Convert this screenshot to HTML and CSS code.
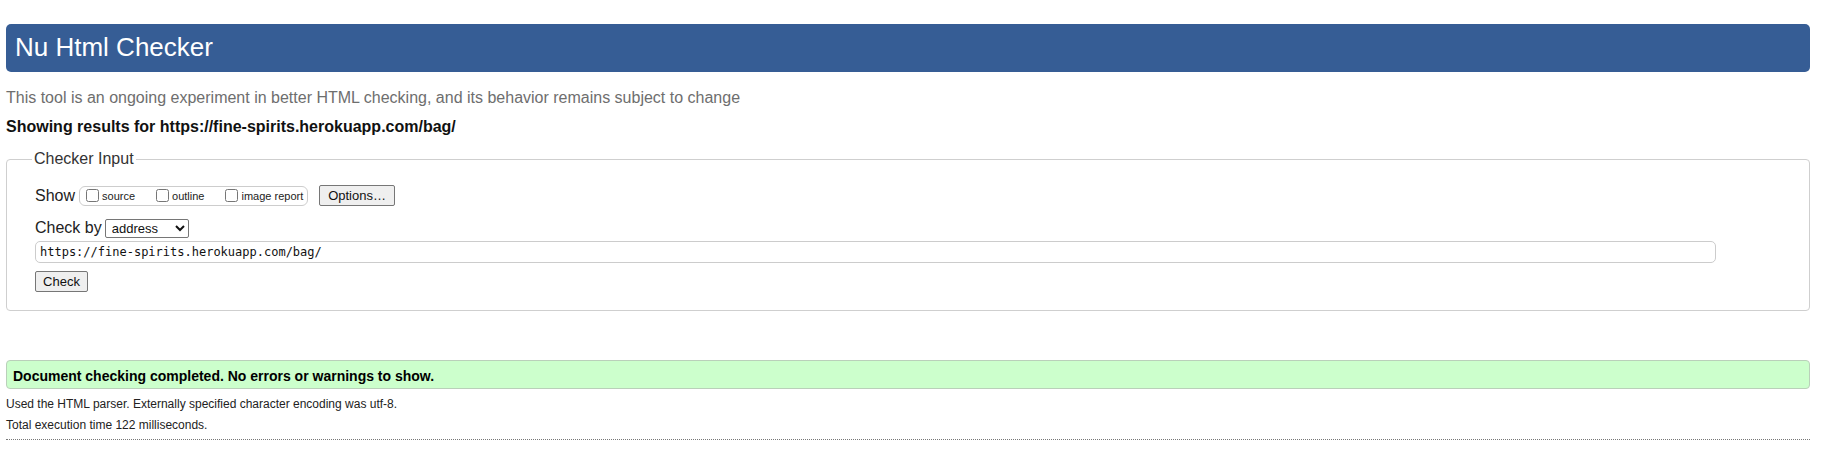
FILE: index.html
```html
<!DOCTYPE html>
<html>
<head>
<meta charset="utf-8">
<title>Nu Html Checker</title>
<link rel="stylesheet" href="styles.css">
</head>
<body>
<div class="page">
  <h1 class="title">Nu Html Checker</h1>
  <p class="intro">This tool is an ongoing experiment in better HTML checking, and its behavior remains subject to change</p>
  <p class="showing">Showing results for https://fine-spirits.herokuapp.com/bag/</p>
  <fieldset class="input-box">
    <legend class="legend">Checker Input</legend>
    <div class="row row-show">
      <span class="label">Show</span>
      <span class="checks">
        <label class="check"><input type="checkbox" class="cb"><span>source</span></label>
        <label class="check"><input type="checkbox" class="cb"><span>outline</span></label>
        <label class="check"><input type="checkbox" class="cb"><span>image report</span></label>
      </span>
      <button class="btn btn-options" type="button">Options…</button>
    </div>
    <div class="row row-by">
      <span class="label">Check by</span>
      <select class="sel"><option>address</option></select>
    </div>
    <div class="row row-url">
      <input class="url" type="text" value="https://fine-spirits.herokuapp.com/bag/">
    </div>
    <div class="row row-check">
      <button class="btn btn-check" type="button">Check</button>
    </div>
  </fieldset>
  <div class="success">Document checking completed. No errors or warnings to show.</div>
  <p class="details">Used the HTML parser. Externally specified character encoding was utf-8.</p>
  <p class="details details-2">Total execution time 122 milliseconds.</p>
  <hr class="rule">
</div>
</body>
</html>
```

FILE: styles.css
```css
html, body {
  margin: 0;
  padding: 0;
  background: #fff;
}
body {
  font-family: "Liberation Sans", Arial, sans-serif;
  color: #000;
}
.page {
  width: 1804px;
  margin-left: 6px;
  padding-top: 24px;
}
.title {
  margin: 0;
  height: 48px;
  box-sizing: border-box;
  background: #365d95;
  color: #fff;
  border-radius: 5px;
  font-size: 26px;
  font-weight: normal;
  line-height: 46px;
  padding-left: 9px;
}
.intro {
  margin: 17px 0 0 0;
  font-size: 16px;
  line-height: 18px;
  color: #6e6e6e;
}
.showing {
  margin: 11px 0 0 0;
  font-size: 16px;
  line-height: 18px;
  font-weight: bold;
  color: #111;
}
.input-box {
  margin: 14px 0 0 0;
  padding: 0 0 18px 28px;
  border: 1px solid #cfcfcf;
  border-radius: 4px;
}
.legend {
  font-size: 16px;
  line-height: 18px;
  color: #333;
  padding: 0 2px;
  margin-left: -3px;
}
.row {
  display: flex;
  align-items: center;
}
.label {
  font-size: 16px;
  line-height: 18px;
  color: #222;
}
.row-show {
  margin-top: 17px;
  height: 21px;
}
.checks {
  display: inline-flex;
  align-items: center;
  margin-left: 4px;
  height: 20px;
  width: 229px;
  box-sizing: border-box;
  border: 1px solid #cdcdcd;
  border-radius: 6px;
  padding-left: 6px;
}
.check {
  display: inline-flex;
  align-items: center;
  font-size: 11px;
  color: #222;
  margin-right: 21px;
}
.check:last-child {
  margin-right: 0;
}
.cb {
  width: 13px;
  height: 13px;
  margin: 0 3px 0 0;
}
.btn {
  font-family: "Liberation Sans", Arial, sans-serif;
  background: #efefef;
  border: 1px solid #767676;
  border-radius: 2px;
  color: #111;
  padding: 0;
  font-size: 13px;
}
.btn-options {
  margin-left: 11px;
  width: 76px;
  height: 21px;
}
.row-by {
  margin-top: 12px;
  height: 20px;
}
.sel {
  margin-left: 3px;
  width: 84px;
  height: 19px;
  font-family: "Liberation Sans", Arial, sans-serif;
  font-size: 13px;
  border: 1px solid #767676;
  border-radius: 2px;
  background: #fff;
  padding: 0 0 0 2px;
  color: #111;
}
.row-url {
  margin-top: 3px;
}
.url {
  width: 1681px;
  height: 22px;
  box-sizing: border-box;
  border: 1px solid #cccccc;
  border-radius: 5px;
  padding: 0 4px;
  font-family: "DejaVu Sans Mono", "Liberation Mono", monospace;
  font-size: 12px;
  color: #111;
}
.row-check {
  margin-top: 8px;
}
.btn-check {
  width: 53px;
  height: 21px;
}
.success {
  margin-top: 49px;
  height: 29px;
  box-sizing: border-box;
  background: #ccffcc;
  border: 1px solid #bad0ba;
  border-radius: 4px;
  font-size: 14px;
  font-weight: bold;
  line-height: 26px;
  padding: 2px 0 0 6px;
  color: #000;
}
.details {
  margin: 8px 0 0 0;
  font-size: 12px;
  line-height: 14px;
  color: #222;
}
.details-2 {
  margin-top: 7px;
}
.rule {
  margin: 7px 0 0 0;
  border: 0;
  border-top: 1px dotted #777;
  height: 0;
}
```
